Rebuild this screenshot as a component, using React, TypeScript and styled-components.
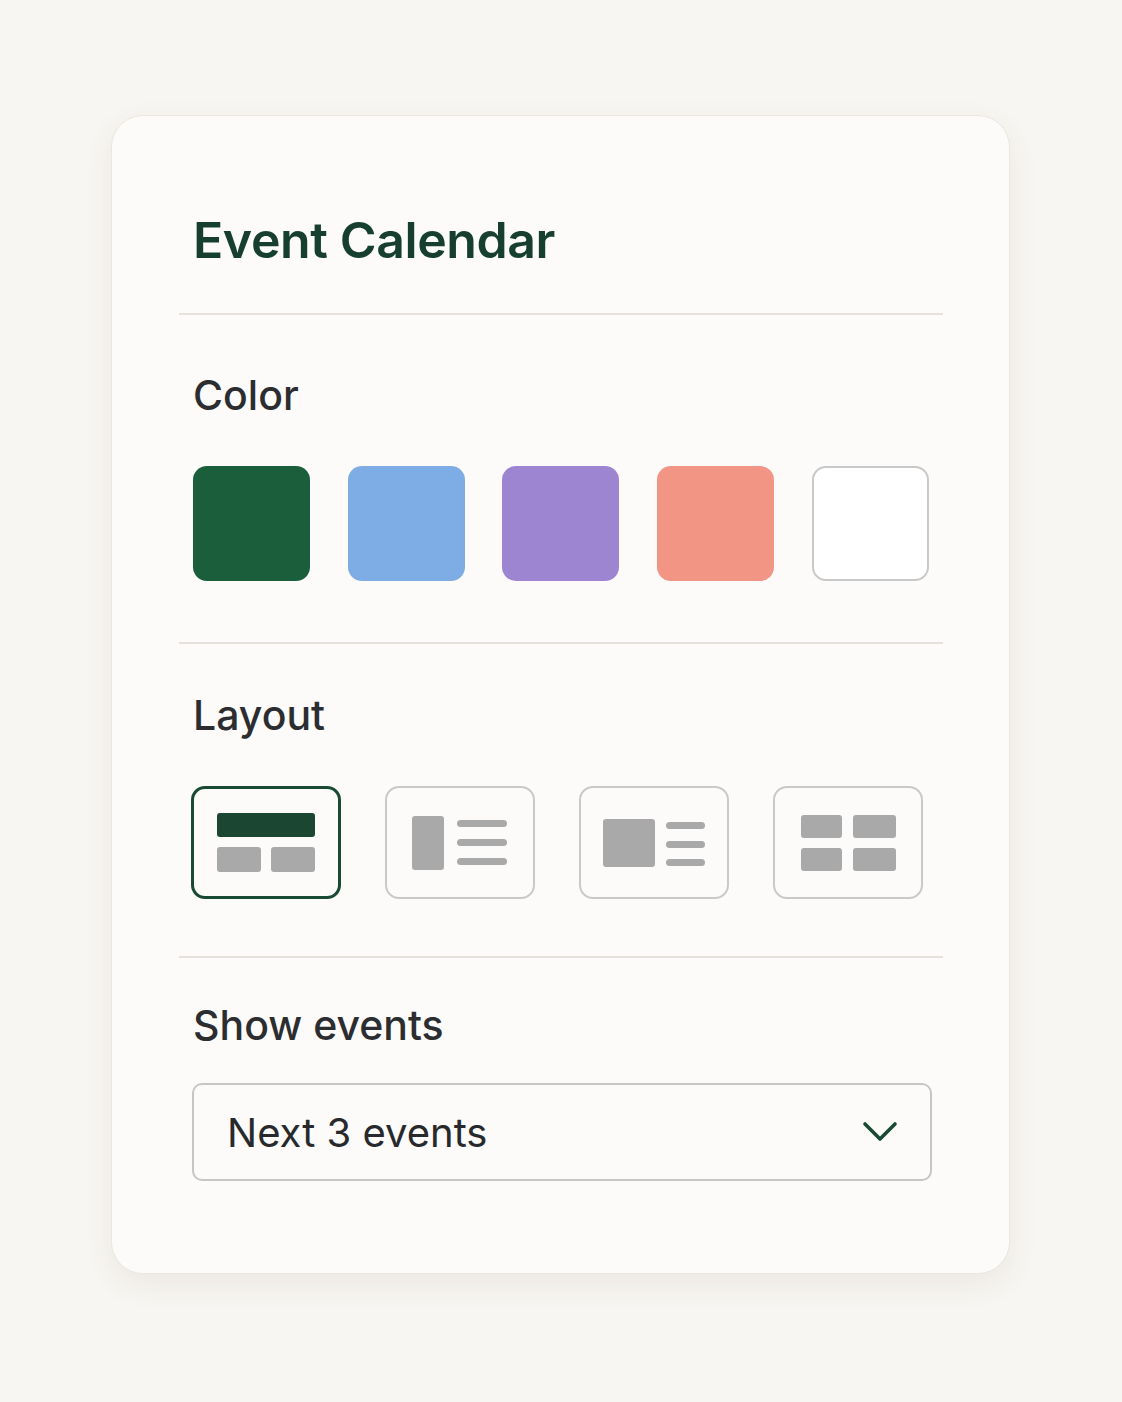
import { useState } from "react";
import styled, { createGlobalStyle } from "styled-components";

const GlobalStyle = createGlobalStyle`
  * { box-sizing: border-box; }
  body {
    margin: 0;
    background: #f8f6f2;
    font-family: Inter, "Noto Sans", sans-serif;
  }
`;

const Page = styled.div`
  min-height: 1402px;
  padding: 115px 0 0 111px;
`;

const Card = styled.div`
  width: 899px;
  background: #fcfbf9;
  border: 1px solid #ebe7df;
  border-radius: 32px;
  box-shadow: 0 10px 30px rgba(80, 70, 50, 0.08);
  padding: 99px 66px 92px 67px;
`;

const Header = styled.div`
  padding: 0 14px 48px;
`;

const Title = styled.h1`
  margin: 0;
  font-size: 50px;
  line-height: 1;
  font-weight: 600;
  letter-spacing: -0.4px;
  color: #173f30;
`;

const Divider = styled.hr`
  margin: 0;
  border: none;
  height: 2px;
  background: #e6e2db;
`;

const Section = styled.section<{ $top: number; $bottom: number }>`
  padding: ${(p) => p.$top}px 14px ${(p) => p.$bottom}px;
`;

const Label = styled.h2`
  margin: 0;
  font-size: 41px;
  line-height: 1;
  font-weight: 500;
  color: #2b2d31;
`;

const Swatches = styled.div`
  display: flex;
  gap: 37.7px;
  margin-top: 50px;
`;

const Swatch = styled.button<{ $color: string; $outlined?: boolean }>`
  width: 117px;
  height: 115px;
  border-radius: 14px;
  padding: 0;
  background: ${(p) => p.$color};
  border: ${(p) => (p.$outlined ? "2px solid #c9c9c9" : "none")};
  cursor: pointer;
`;

const Tiles = styled.div`
  display: flex;
  gap: 44px;
  margin-top: 50px;
  margin-left: -2px;
`;

const Tile = styled.button<{ $active: boolean }>`
  width: 150px;
  height: 113px;
  border-radius: 14px;
  padding: 0;
  background: #fcfbf9;
  border: ${(p) => (p.$active ? "3px solid #184a34" : "2px solid #c9c9c9")};
  display: flex;
  align-items: center;
  justify-content: center;
  cursor: pointer;
`;

const Select = styled.div`
  margin-top: 37px;
  margin-left: -1px;
  width: 740px;
  height: 98px;
  border: 2px solid #c6c6c6;
  border-radius: 10px;
  display: flex;
  align-items: center;
  justify-content: space-between;
  padding: 0 32px 0 33px;
  font-size: 40px;
  font-weight: 400;
  color: #27292d;
`;

const FILL = "#a9a9a9";

function LayoutIcon({ kind, active }: { kind: number; active: boolean }) {
  if (kind === 0) {
    return (
      <svg width="98" height="59" viewBox="0 0 98 59">
        <rect x="0" y="0" width="98" height="24" rx="3" fill={active ? "#1a4632" : FILL} />
        <rect x="0" y="34" width="44" height="25" rx="3" fill={FILL} />
        <rect x="54" y="34" width="44" height="25" rx="3" fill={FILL} />
      </svg>
    );
  }
  if (kind === 1) {
    return (
      <svg width="96" height="54" viewBox="0 0 96 54">
        <rect x="0" y="0" width="32" height="54" rx="3" fill={FILL} />
        <rect x="45" y="4" width="50" height="7" rx="3.5" fill={FILL} />
        <rect x="45" y="23" width="50" height="7" rx="3.5" fill={FILL} />
        <rect x="45" y="42" width="50" height="7" rx="3.5" fill={FILL} />
      </svg>
    );
  }
  if (kind === 2) {
    return (
      <svg width="102" height="48" viewBox="0 0 102 48">
        <rect x="0" y="0" width="52" height="48" rx="3" fill={FILL} />
        <rect x="63" y="3" width="39" height="7" rx="3.5" fill={FILL} />
        <rect x="63" y="22" width="39" height="7" rx="3.5" fill={FILL} />
        <rect x="63" y="40" width="39" height="7" rx="3.5" fill={FILL} />
      </svg>
    );
  }
  return (
    <svg width="95" height="56" viewBox="0 0 95 56">
      <rect x="0" y="0" width="41" height="23" rx="3" fill={FILL} />
      <rect x="52" y="0" width="43" height="23" rx="3" fill={FILL} />
      <rect x="0" y="33" width="41" height="23" rx="3" fill={FILL} />
      <rect x="52" y="33" width="43" height="23" rx="3" fill={FILL} />
    </svg>
  );
}

const colors = ["#1b5e3c", "#7eade6", "#9d85d2", "#f29584", "#ffffff"];

export default function App() {
  const [layout, setLayout] = useState(0);
  return (
    <Page>
      <GlobalStyle />
      <Card>
        <Header>
          <Title>Event Calendar</Title>
        </Header>
        <Divider />
        <Section $top={60} $bottom={61}>
          <Label>Color</Label>
          <Swatches>
            {colors.map((c, i) => (
              <Swatch key={c} $color={c} $outlined={i === 4} />
            ))}
          </Swatches>
        </Section>
        <Divider />
        <Section $top={51} $bottom={57}>
          <Label>Layout</Label>
          <Tiles>
            {[0, 1, 2, 3].map((k) => (
              <Tile key={k} $active={layout === k} onClick={() => setLayout(k)}>
                <LayoutIcon kind={k} active={layout === k} />
              </Tile>
            ))}
          </Tiles>
        </Section>
        <Divider />
        <Section $top={47} $bottom={0}>
          <Label>Show events</Label>
          <Select>
            <span>Next 3 events</span>
            <svg width="36" height="22" viewBox="0 0 36 22">
              <path d="M3 3 L18 18 L33 3" fill="none" stroke="#184a34" strokeWidth="3.6" strokeLinecap="round" strokeLinejoin="round" />
            </svg>
          </Select>
        </Section>
      </Card>
    </Page>
  );
}
